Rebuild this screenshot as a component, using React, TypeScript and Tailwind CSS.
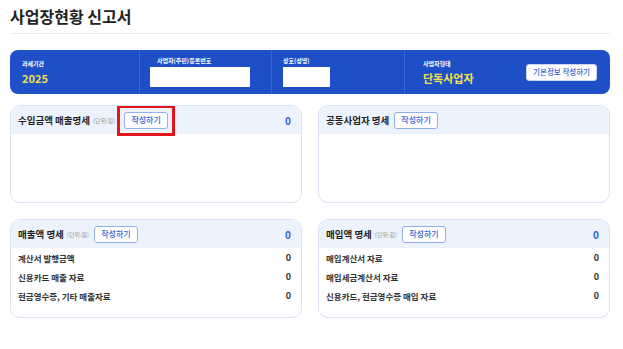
const font = { fontFamily: '"Noto Sans CJK KR", "Noto Sans", sans-serif' }

function WriteButton({ highlight }: { highlight?: boolean }) {
  const btn = (
    <span className="inline-flex h-[17px] items-center rounded-[3px] border border-[#8fb0ea] bg-white px-[6px] text-[8px] font-medium text-[#2f63d4]">
      작성하기
    </span>
  )
  if (!highlight) return btn
  return <span className="-ml-[3px] inline-flex h-[31px] items-center border-[3px] border-[#e3141b] px-[4px]">{btn}</span>
}

function Card({
  title,
  unit,
  total,
  highlight,
  rows,
}: {
  title: string
  unit?: boolean
  total?: string
  highlight?: boolean
  rows?: string[]
}) {
  return (
    <section className="overflow-hidden rounded-[10px] border border-[#d8e2f4] bg-white">
      <div className="flex h-[28px] items-center gap-[5px] bg-[#edf3fd] pl-[7px] pr-[10px]">
        <span className="text-[9.5px] font-bold text-[#1f1f1f]">{title}</span>
        {unit && <span className="-ml-[2px] text-[6px] text-[#999]">(단위:원)</span>}
        <WriteButton highlight={highlight} />
        {total && <span className="ml-auto text-[10px] font-bold text-[#2f63d4]">{total}</span>}
      </div>
      {rows ? (
        <ul className="flex h-[69px] flex-col gap-[7px] px-[10px] pt-[4px]">
          {rows.map((r) => (
            <li key={r} className="flex h-[12px] items-center justify-between text-[8.5px] font-bold text-[#333]">
              <span className="-ml-[3px]">{r}</span>
              <span className="text-[9px] font-bold">0</span>
            </li>
          ))}
        </ul>
      ) : (
        <div className="h-[68px]" />
      )}
    </section>
  )
}

export default function App() {
  return (
    <main className="h-[349px] w-[623px] bg-white pl-[10px] pr-[13px]" style={font}>
      <header className="border-b border-[#ececec] pb-[6px] pt-[5px]">
        <h1 className="text-[16px] font-semibold leading-[22px] text-[#222]">사업장현황 신고서</h1>
      </header>

      <div className="mt-[16px] flex h-[44px] items-center rounded-[8px] bg-[#1e4fc7] text-white">
        <div className="flex h-full w-[130px] flex-col justify-center border-r border-[#3b66cf] pl-[12px]">
          <span className="text-[6px] font-semibold leading-[8px]">과세기간</span>
          <span className="mt-[4px] text-[11px] font-bold leading-[13px] text-[#f3e14b]">2025</span>
        </div>
        <div className="flex h-full w-[132px] flex-col justify-center border-r border-[#3b66cf] pl-[10px]">
          <span className="pl-[7px] text-[6px] font-semibold leading-[8px]">사업자(주민)등록번호</span>
          <span className="mt-[2px] h-[20px] w-[100px] bg-white" />
        </div>
        <div className="flex h-full w-[133px] flex-col justify-center border-r border-[#3b66cf] pl-[11px]">
          <span className="text-[6px] font-semibold leading-[8px]">상호(성명)</span>
          <span className="mt-[2px] h-[20px] w-[47px] bg-white" />
        </div>
        <div className="flex h-full flex-col justify-center pl-[18px]">
          <span className="text-[6px] font-semibold leading-[8px]">사업자형태</span>
          <span className="mt-[4px] text-[11px] font-bold leading-[13px] text-[#f3e14b]">단독사업자</span>
        </div>
        <span className="ml-auto mr-[13px] inline-flex h-[17px] items-center rounded-[3px] border border-[#c9d6f3] bg-white px-[6px] text-[7.5px] font-medium text-[#2f63d4]">
          기본정보 작성하기
        </span>
      </div>

      <div className="mt-[11px] grid grid-cols-2 gap-x-[16px] gap-y-[16px]">
        <Card title="수입금액 매출명세" unit total="0" highlight />
        <Card title="공동사업자 명세" />
        <Card
          title="매출액 명세"
          unit
          total="0"
          rows={['계산서 발행금액', '신용카드 매출 자료', '현금영수증, 기타 매출자료']}
        />
        <Card
          title="매입액 명세"
          unit
          total="0"
          rows={['매입계산서 자료', '매입세금계산서 자료', '신용카드, 현금영수증 매입 자료']}
        />
      </div>
    </main>
  )
}
